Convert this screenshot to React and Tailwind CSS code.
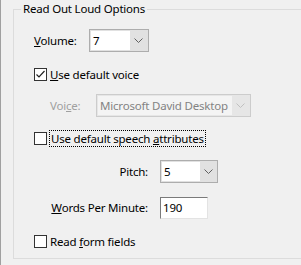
import React from 'react';

const Chevron = ({ color = '#606060' }) => (
    <svg width="9" height="5" viewBox="0 0 9 5" fill="none">
        <polyline points="0.5,0.5 4.5,4.5 8.5,0.5" stroke={color} strokeWidth="1" />
    </svg>
);

const Combo = ({ value, width, editWidth, disabled }) => (
    <div
        className={`flex h-[23px] border p-[1px] ${disabled ? 'border-[#cccccc] bg-[#e6e6e6]' : 'border-[#adadad] bg-[#e1e1e1]'}`}
        style={{ width }}
    >
        <div
            className={`flex items-center h-full pl-[2px] overflow-hidden whitespace-nowrap ${disabled ? 'bg-[#f4f4f4] text-[#838383]' : 'bg-white text-black'}`}
            style={{ width: editWidth }}
        >
            {value}
        </div>
        <div className="flex-1 flex items-center justify-center">
            <Chevron color={disabled ? '#c0c0c0' : '#606060'} />
        </div>
    </div>
);

const Check = ({ checked }) => (
    <div className="w-[13px] h-[13px] border border-[#333333] bg-white flex items-center justify-center shrink-0">
        {checked && (
            <svg width="11" height="11" viewBox="0 0 11 11" fill="none">
                <polyline points="1.5,5.5 4,8 9.5,2" stroke="#222222" strokeWidth="1.2" />
            </svg>
        )}
    </div>
);

const App = () => {
    return (
        <div
            className="w-[301px] h-[265px] bg-[#f0f0f0] border-l border-[#a0a0a0] overflow-hidden text-[11.5px] tracking-[-0.2px] leading-none text-black"
            style={{ fontFamily: '"Noto Sans", "Open Sans", sans-serif' }}
        >
            {/* Group box */}
            <div className="relative ml-[12px] mt-[9px] w-[300px] h-[250px] border border-[#dcdcdc]">
                <span className="absolute left-[7px] top-[-7px] px-[2px] bg-[#f0f0f0]">Read Out Loud Options</span>

                <div className="flex flex-col pl-[20px]">
                    {/* Volume */}
                    <div className="flex items-center mt-[19px]">
                        <span className="w-[55px]"><u>V</u>olume:</span>
                        <Combo value="7" width="60px" editWidth="39px" />
                    </div>

                    {/* Use default voice */}
                    <div className="flex items-center gap-[3px] h-[13px] mt-[16px]">
                        <Check checked />
                        <span><u>U</u>se default voice</span>
                    </div>

                    {/* Voice */}
                    <div className="flex items-center mt-[13px] pl-[16px]">
                        <span className="w-[46px] text-[#a0a0a0]">Voi<u>c</u>e:</span>
                        <Combo value="Microsoft David Desktop" width="155px" editWidth="134px" disabled />
                    </div>

                    {/* Use default speech attributes */}
                    <div className="flex items-center gap-[2px] h-[13px] mt-[15px]">
                        <Check />
                        <span className="border border-dotted border-black px-[1px] py-[2px]">Use default speech <u>a</u>ttributes</span>
                    </div>

                    {/* Pitch */}
                    <div className="flex items-center mt-[15px]">
                        <span className="w-[126px] pr-[12px] text-right">Pitch:</span>
                        <Combo value="5" width="58px" editWidth="38px" />
                    </div>

                    {/* Words per minute */}
                    <div className="flex items-center mt-[14px]">
                        <span className="w-[126px] pr-[12px] text-right"><u>W</u>ords Per Minute:</span>
                        <div className="w-[48px] h-[22px] bg-white border border-t-[#7a7a7a] border-l-[#7a7a7a] border-r-[#e3e3e3] border-b-[#e3e3e3] flex items-center pl-[2px]">
                            190
                        </div>
                    </div>

                    {/* Read form fields */}
                    <div className="flex items-center gap-[3px] h-[13px] mt-[16px]">
                        <Check />
                        <span>Read <u>f</u>orm fields</span>
                    </div>
                </div>
            </div>
        </div>
    );
};

export default App;
